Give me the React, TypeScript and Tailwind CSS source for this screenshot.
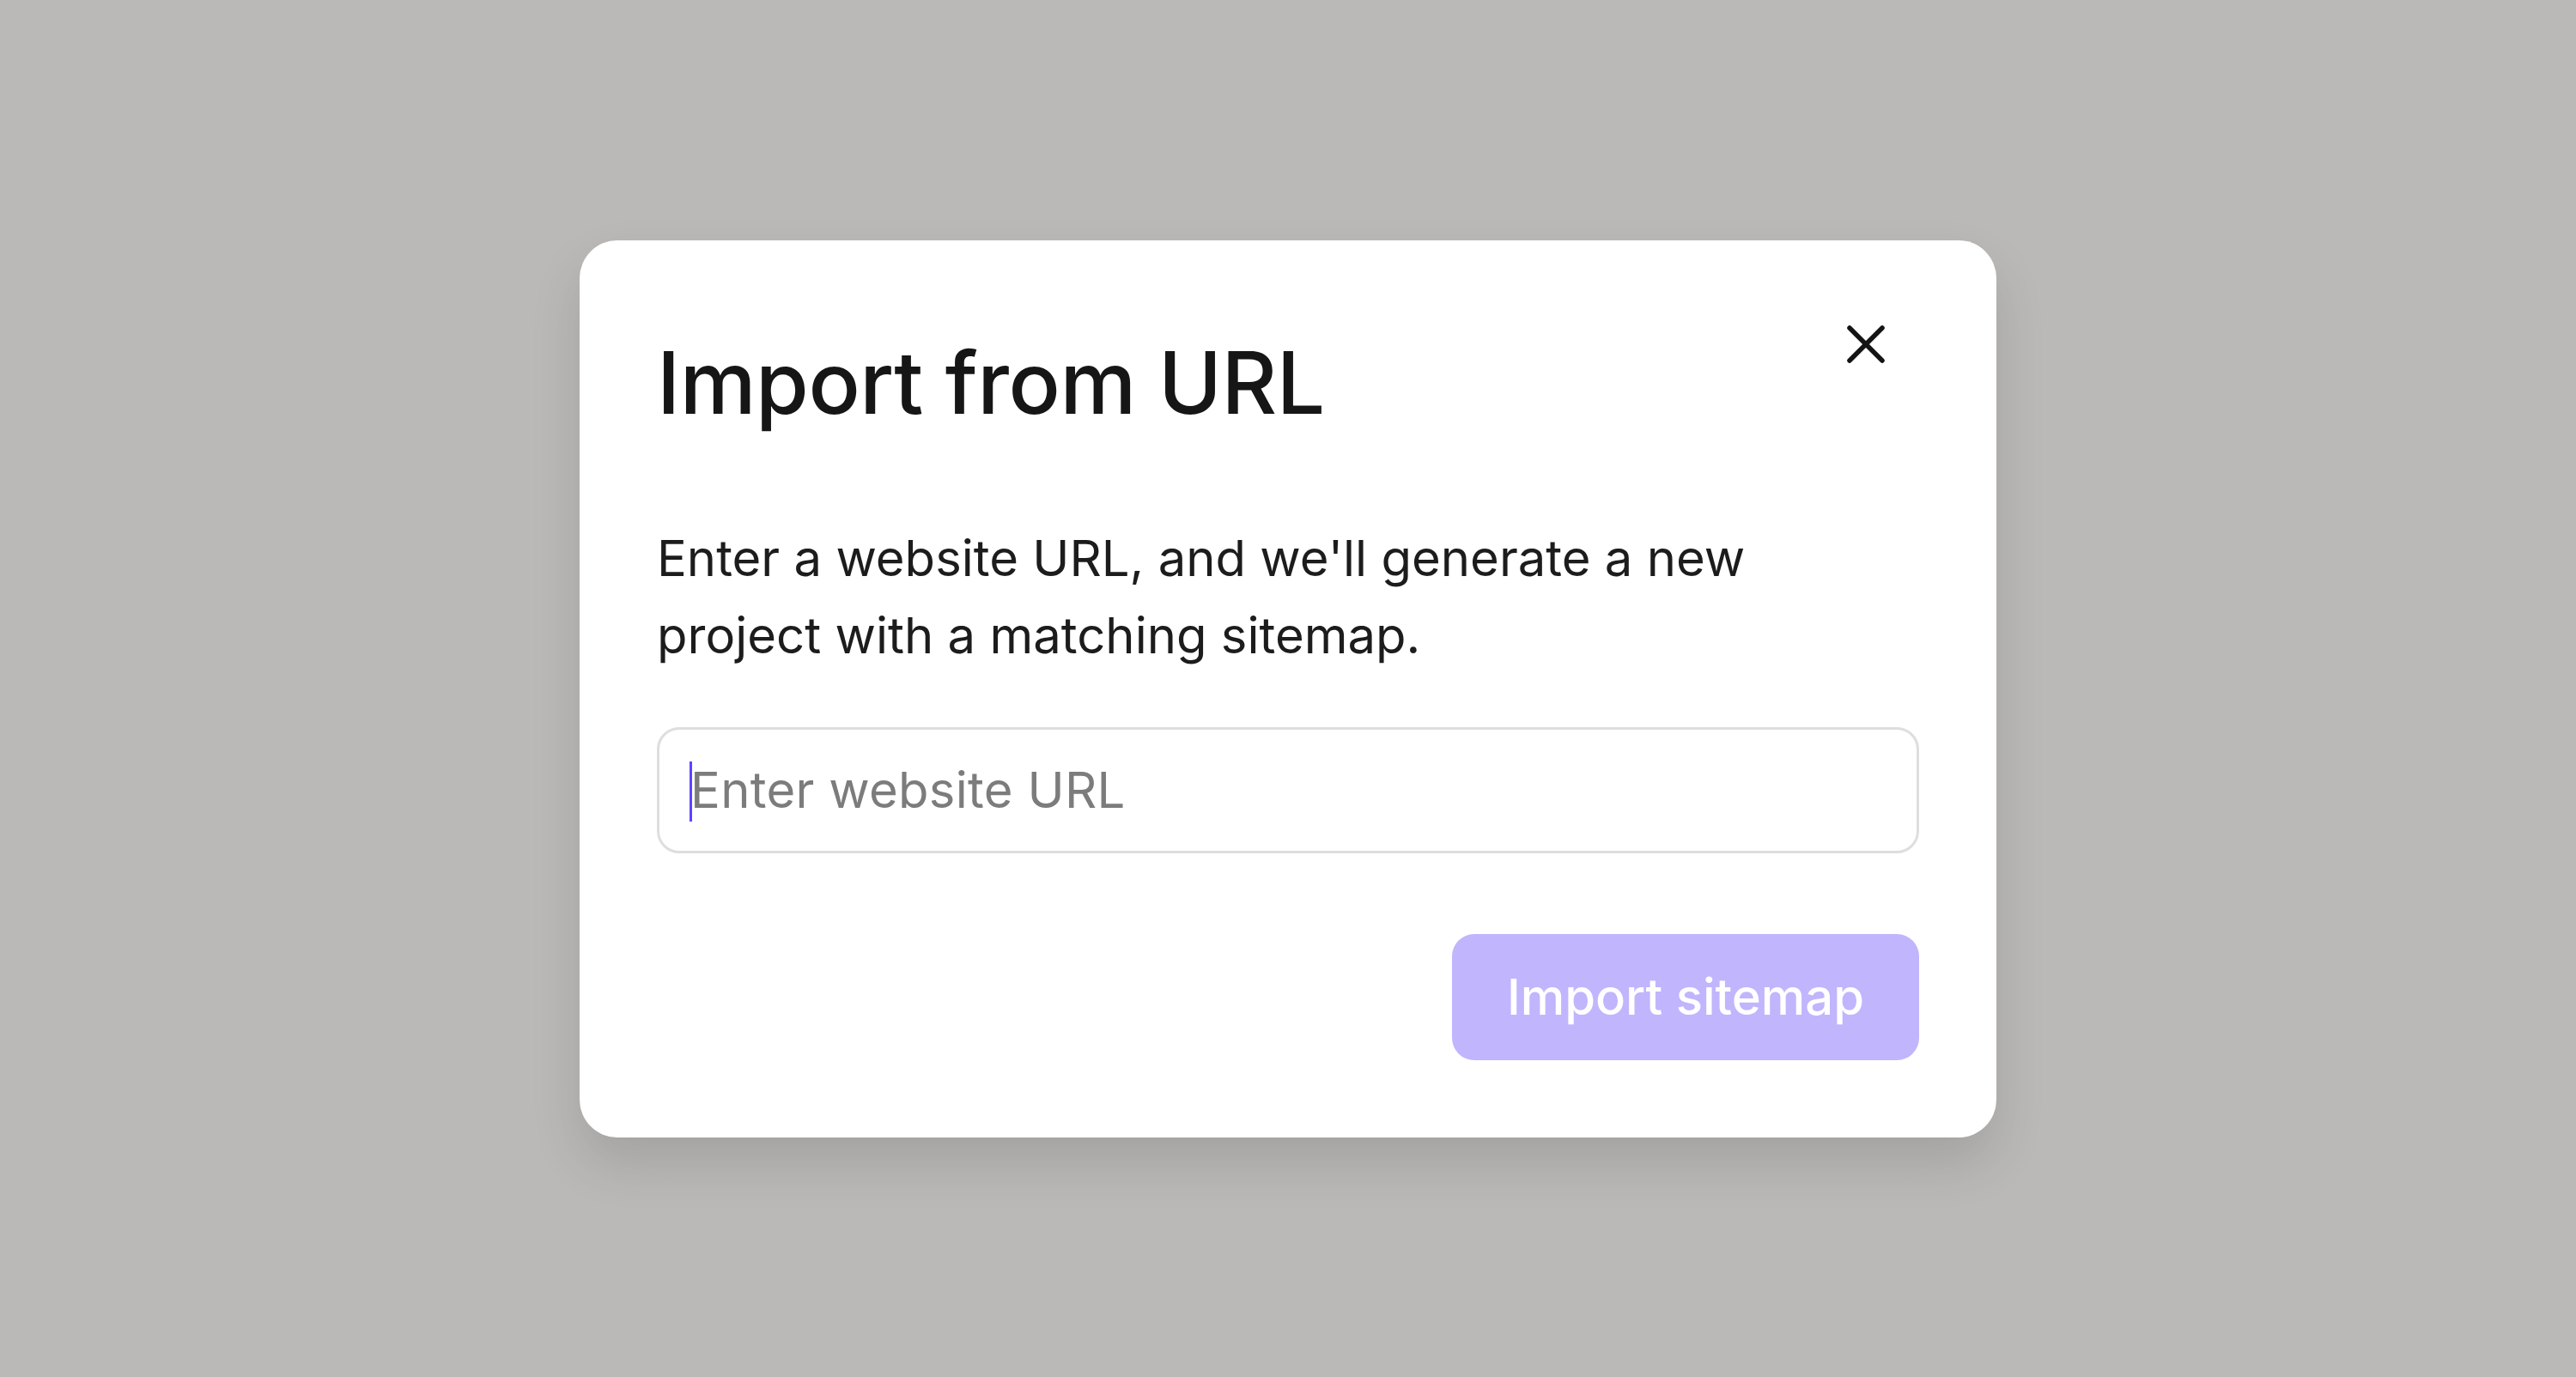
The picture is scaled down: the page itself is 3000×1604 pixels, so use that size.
import React from 'react';

function CloseIcon() {
  return (
    <svg width="48" height="48" viewBox="0 0 48 48" fill="none" stroke="#141414" strokeWidth="5.5" strokeLinecap="round">
      <path d="M5 5 L43 43" />
      <path d="M43 5 L5 43" />
    </svg>
  );
}

export default function App() {
  return (
    <div className="w-full h-[1604px] bg-[#bab9b7] flex items-center justify-center font-['Inter',sans-serif]">
      <div className="relative w-[1650px] bg-white rounded-[44px] shadow-[0_30px_60px_rgba(0,0,0,0.12)] px-[90px] pt-[106px] pb-[90px]">
        <button className="absolute top-[97px] right-[128px] flex items-center justify-center w-[48px] h-[48px]">
          <CloseIcon />
        </button>

        <h1 className="text-[100px] leading-[120px] font-medium text-[#161616] tracking-[-0.005em]">
          Import from URL
        </h1>

        <p className="mt-[99px] text-[58px] leading-[90px] text-[#1c1c1c] w-[1350px]">
          Enter a website URL, and we'll generate a new project with a matching sitemap.
        </p>

        <div className="relative mt-[62px] h-[147px] rounded-[26px] border-[3px] border-[#dedede] flex items-center px-[36px]">
          <span className="absolute left-[35px] top-[37px] w-[3px] h-[70px] bg-[#5b45ff]" />
          <input
            className="w-full bg-transparent outline-none text-[58px] text-[#1c1c1c] placeholder:text-[#7c7c7c] tracking-[0.005em]"
            placeholder="Enter website URL"
          />
        </div>

        <div className="mt-[94px] flex justify-end">
          <button className="h-[147px] w-[544px] rounded-[26px] bg-[#c1b5fe] text-white text-[58px] font-medium">
            Import sitemap
          </button>
        </div>
      </div>
    </div>
  );
}
